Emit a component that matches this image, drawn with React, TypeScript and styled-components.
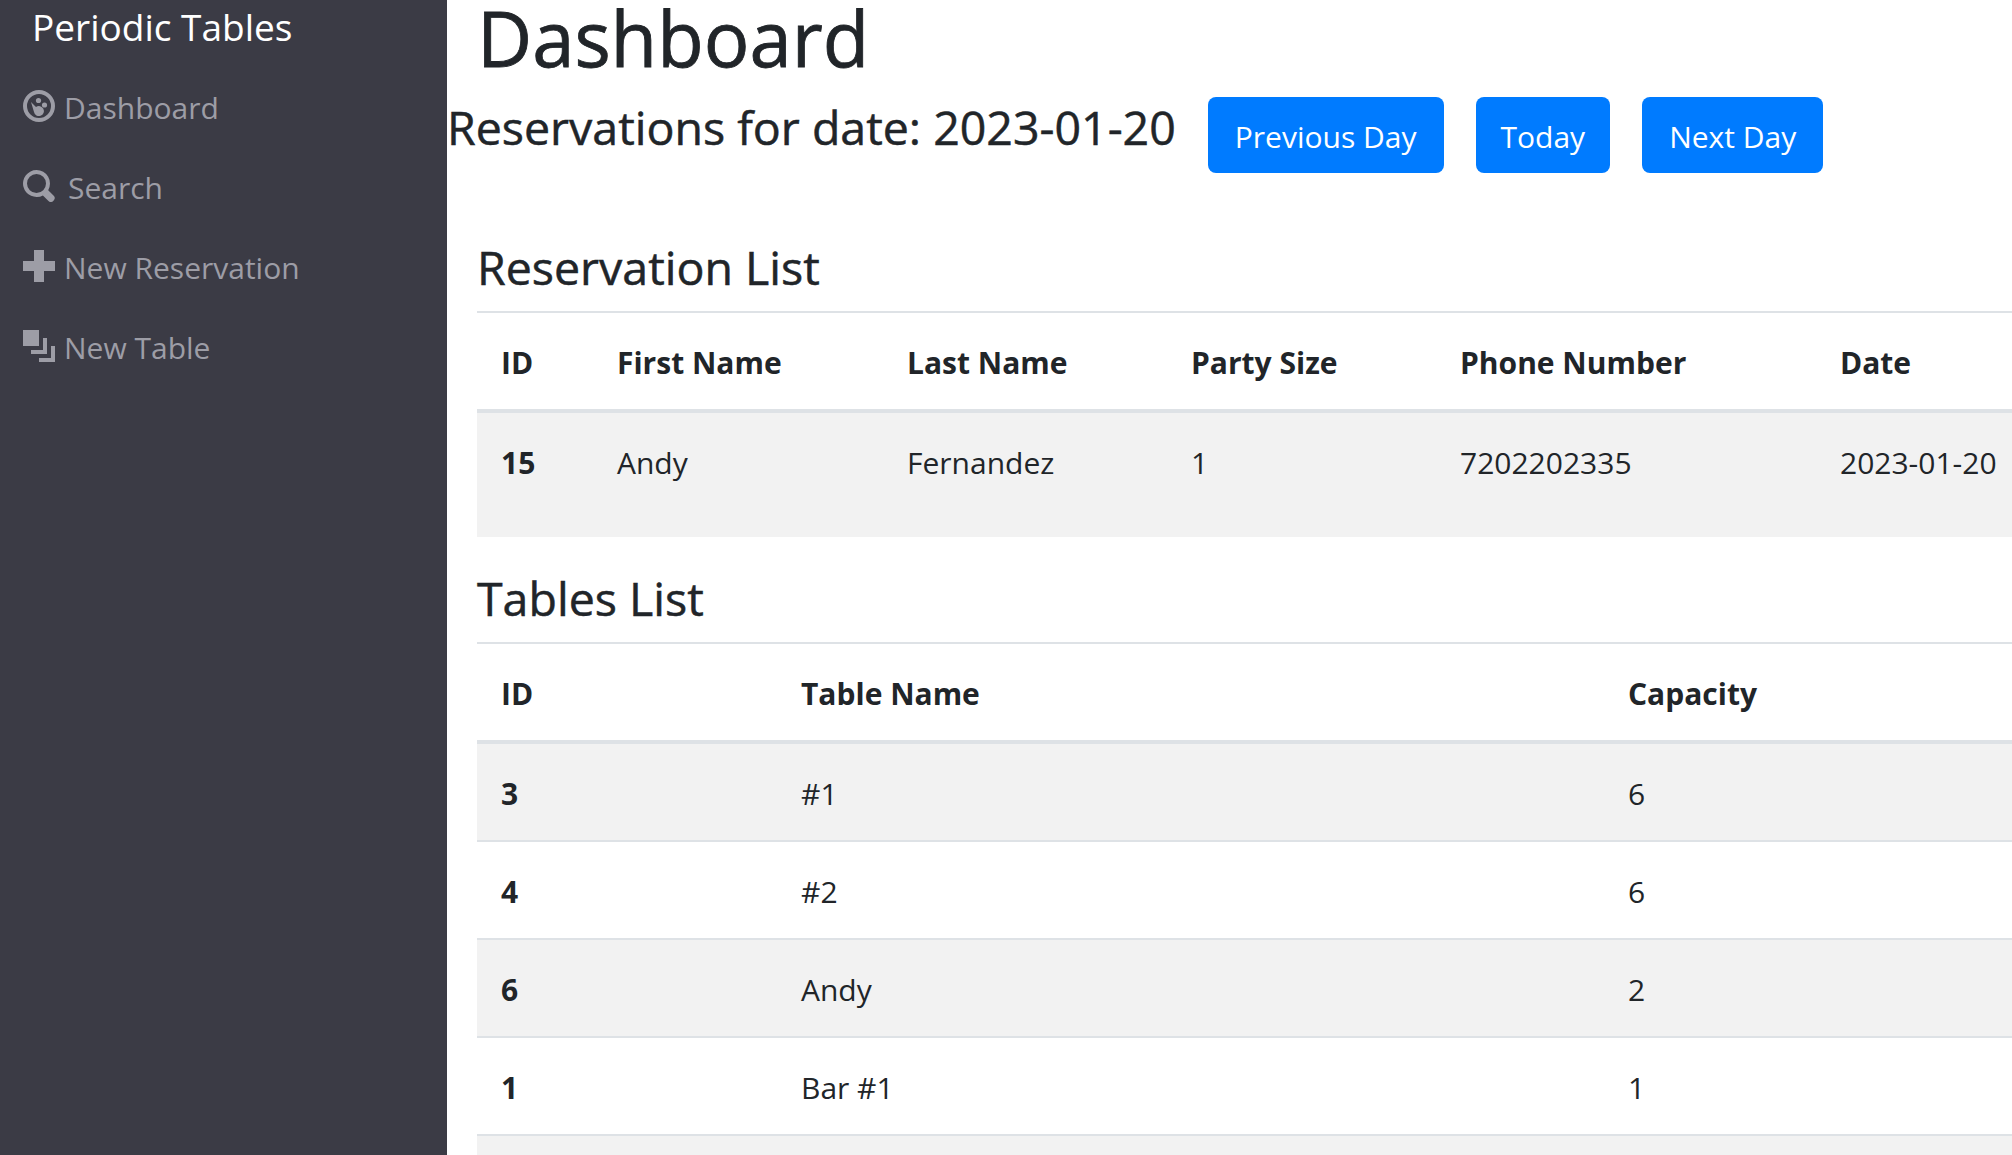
import React from "react";
import styled, { createGlobalStyle } from "styled-components";

const GlobalStyle = createGlobalStyle`
  html, body {
    margin: 0;
    height: 100%;
    overflow: hidden;
    background: #fff;
  }
  body {
    font-family: "Open Sans", "Noto Sans", sans-serif;
    font-size: 30px;
    line-height: 48px;
    color: #212529;
  }
  * {
    box-sizing: border-box;
  }
`;

const DashboardIcon = () => (
  <svg viewBox="0 0 32 32" width="32" height="32" fill="currentColor">
    <path
      fillRule="evenodd"
      d="M16 0a16 16 0 1 0 0 32 16 16 0 0 0 0-32zm0 4a12 12 0 1 1 0 24 12 12 0 0 1 0-24z"
    />
    <circle cx="15.500" cy="10.500" r="2.600" />
    <circle cx="21.500" cy="15" r="2.600" />
    <path d="M8 12L13 17A5 5 0 1 1 11 22Z" />
  </svg>
);

const SearchIcon = () => (
  <svg viewBox="0 0 32 32" width="32" height="32" fill="currentColor">
    <path
      fillRule="evenodd"
      d="M13.500 0a13.500 13.500 0 1 0 6.400 25.400l5.300 5.300a3.700 3.700 0 0 0 5.300-5.300l-5.300-5.200A13.500 13.500 0 0 0 13.500 0zm0 4a9.500 9.500 0 1 1 0 19 9.500 9.500 0 0 1 0-19z"
    />
  </svg>
);

const PlusIcon = () => (
  <svg viewBox="0 0 32 32" width="32" height="32" fill="currentColor">
    <path d="M11 0h10v11h11v10H21v11H11V21H0V11h11z" />
  </svg>
);

const LayersIcon = () => (
  <svg viewBox="0 0 32 32" width="32" height="32" fill="currentColor">
    <path d="M0 0h16v16H0zM20 8h4v16H8v-4h12zM28 16h4v16H16v-4h12z" />
  </svg>
);

const navItems = [
  { label: "Dashboard", icon: <DashboardIcon />, gap: 9 },
  { label: "Search", icon: <SearchIcon />, gap: 13 },
  { label: "New Reservation", icon: <PlusIcon />, gap: 9 },
  { label: "New Table", icon: <LayersIcon />, gap: 9 },
];

const reservationColumns = [
  { title: "ID", width: 116 },
  { title: "First Name", width: 290 },
  { title: "Last Name", width: 284 },
  { title: "Party Size", width: 269 },
  { title: "Phone Number", width: 380 },
  { title: "Date", width: 300 },
];

const tableColumns = [
  { title: "ID", width: 300 },
  { title: "Table Name", width: 827 },
  { title: "Capacity", width: 473 },
];

const tables = [
  { id: 3, name: "#1", capacity: 6 },
  { id: 4, name: "#2", capacity: 6 },
  { id: 6, name: "Andy", capacity: 2 },
  { id: 1, name: "Bar #1", capacity: 1 },
];

const App = () => {
  return (
    <Layout>
      <GlobalStyle />
      <Sidebar>
        <Brand>Periodic Tables</Brand>
        <Nav>
          {navItems.map((item) => (
            <NavItem key={item.label} $gap={item.gap}>
              {item.icon}
              {item.label}
            </NavItem>
          ))}
        </Nav>
      </Sidebar>
      <Main>
        <PageTitle>Dashboard</PageTitle>
        <DateRow>
          <DateHeading>Reservations for date: 2023-01-20</DateHeading>
          <Button $padding={27}>Previous Day</Button>
          <Button $padding={25}>Today</Button>
          <Button $padding={27}>Next Day</Button>
        </DateRow>
        <Section>
          <SectionTitle>Reservation List</SectionTitle>
          <DataTable>
            <colgroup>
              {reservationColumns.map((col) => (
                <col key={col.title} width={col.width} />
              ))}
            </colgroup>
            <thead>
              <tr>
                {reservationColumns.map((col) => (
                  <Th key={col.title}>{col.title}</Th>
                ))}
              </tr>
            </thead>
            <tbody>
              <ReservationRow>
                <Th as="td" $body>15</Th>
                <Td>Andy</Td>
                <Td>Fernandez</Td>
                <Td>1</Td>
                <Td>7202202335</Td>
                <Td>2023-01-20</Td>
              </ReservationRow>
            </tbody>
          </DataTable>
        </Section>
        <Section>
          <SectionTitle>Tables List</SectionTitle>
          <DataTable>
            <colgroup>
              {tableColumns.map((col) => (
                <col key={col.title} width={col.width} />
              ))}
            </colgroup>
            <thead>
              <tr>
                {tableColumns.map((col) => (
                  <Th key={col.title}>{col.title}</Th>
                ))}
              </tr>
            </thead>
            <tbody>
              {tables.map((table, index) => (
                <Row key={table.id} $striped={index % 2 === 0}>
                  <Th as="td" $body>{table.id}</Th>
                  <Td>{table.name}</Td>
                  <Td>{table.capacity}</Td>
                </Row>
              ))}
              <Row $striped>
                <Td colSpan={3} />
              </Row>
            </tbody>
          </DataTable>
        </Section>
      </Main>
    </Layout>
  );
};

export default App;

const Layout = styled.div`
  display: flex;
  height: 1155px;
  width: 2012px;
  overflow: hidden;
`;

const Sidebar = styled.aside`
  flex: 0 0 447px;
  background-color: #3b3b45;
`;

const Brand = styled.div`
  padding-left: 32px;
  font-size: 37px;
  line-height: 54px;
  color: #fff;
`;

const Nav = styled.nav`
  display: flex;
  flex-direction: column;
  margin-top: 14px;
`;

const NavItem = styled.div<{ $gap: number }>`
  display: flex;
  align-items: center;
  gap: ${(p) => p.$gap}px;
  height: 80px;
  padding-left: 23px;
  color: #9d9da6;

  svg {
    margin-bottom: 5px;
  }
`;

const Main = styled.main`
  flex: 1;
  min-width: 0;
`;

const PageTitle = styled.h1`
  margin: 0 0 0 30px;
  font-size: 76px;
  font-weight: 400;
  line-height: 76px;
  -webkit-text-stroke: 0.8px #212529;
`;

const DateRow = styled.div`
  display: flex;
  align-items: flex-start;
  gap: 32px;
  margin: 21px 0 65px;
`;

const DateHeading = styled.h4`
  margin: 1px 0 0;
  font-size: 46.500px;
  font-weight: 400;
  line-height: 58px;
  -webkit-text-stroke: 0.5px #212529;
`;

const Button = styled.button<{ $padding: number }>`
  height: 76px;
  padding: 3px ${(p) => p.$padding}px 0;
  border: 0;
  border-radius: 8px;
  background-color: #007bff;
  color: #fff;
  font: inherit;
`;

const Section = styled.section`
  margin: 32px 0 0 30px;
`;

const SectionTitle = styled.h4`
  margin: 0 0 15px;
  font-size: 46.500px;
  font-weight: 400;
  line-height: 58px;
  -webkit-text-stroke: 0.5px #212529;
`;

const DataTable = styled.table`
  width: 1600px;
  table-layout: fixed;
  border-collapse: collapse;
`;

const Th = styled.th<{ $body?: boolean }>`
  padding: 26px 24px 22px;
  text-align: left;
  font-weight: 700;
  vertical-align: top;
  border-top: 2px solid #dee2e6;
  border-bottom: ${(p) => (p.$body ? "0" : "4px solid #dee2e6")};
`;

const Td = styled.td`
  padding: 26px 24px 22px;
  vertical-align: top;
  border-top: 2px solid #dee2e6;
`;

const ReservationRow = styled.tr`
  background-color: #f2f2f2;
  height: 126px;
`;

const Row = styled.tr<{ $striped?: boolean }>`
  background-color: ${(p) => (p.$striped ? "#f2f2f2" : "#fff")};
`;
